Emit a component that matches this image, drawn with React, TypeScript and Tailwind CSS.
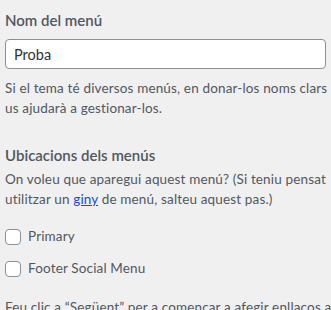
import React from 'react';

const locations = ['Primary', 'Footer Social Menu'];

export default function App() {
  return (
    <div className="w-[331px] h-[310px] overflow-hidden bg-[#f0f0f1] px-[5px] pt-[8px] text-[#50575e] font-['Lato',sans-serif]">
      <label className="block text-[15px] leading-[24px] font-semibold text-[#50575e]">Nom del menú</label>
      <input
        type="text"
        defaultValue="Proba"
        className="mt-[7px] block w-full h-[30px] rounded-[4px] border border-[#8c8f94] bg-white px-[8px] text-[14.5px] text-[#2c3338] outline-none font-['Lato',sans-serif]"
      />
      <p className="mt-[10px] text-[13.5px] leading-[19.5px] tracking-[0.15px] whitespace-nowrap">
        Si el tema té diversos menús, en donar-los noms clars
        <br />
        us ajudarà a gestionar-los.
      </p>

      <h3 className="mt-[25px] text-[15px] leading-[24px] font-semibold">Ubicacions dels menús</h3>
      <p className="mt-[3px] text-[13.5px] leading-[19.5px] tracking-[0.15px] whitespace-nowrap">
        On voleu que aparegui aquest menú? (Si teniu pensat
        <br />
        utilitzar un <a href="#" className="text-[#2145e6] underline">giny</a> de menú, salteu aquest pas.)
      </p>

      <ul className="mt-[18px] flex flex-col gap-[12px]">
        {locations.map((name) => (
          <li key={name} className="flex items-center gap-[7px] h-[20px]">
            <span className="block w-[16px] h-[16px] rounded-[4px] border border-[#8c8f94] bg-white" />
            <span className="text-[13.5px] leading-[19.5px] tracking-[0.15px]">{name}</span>
          </li>
        ))}
      </ul>

      <p className="mt-[19px] text-[13.5px] leading-[19.5px] tracking-[0.15px] whitespace-nowrap">
        Feu clic a “Següent” per a començar a afegir enllaços al
        <br />
        vostre menú nou.
      </p>
    </div>
  );
}
